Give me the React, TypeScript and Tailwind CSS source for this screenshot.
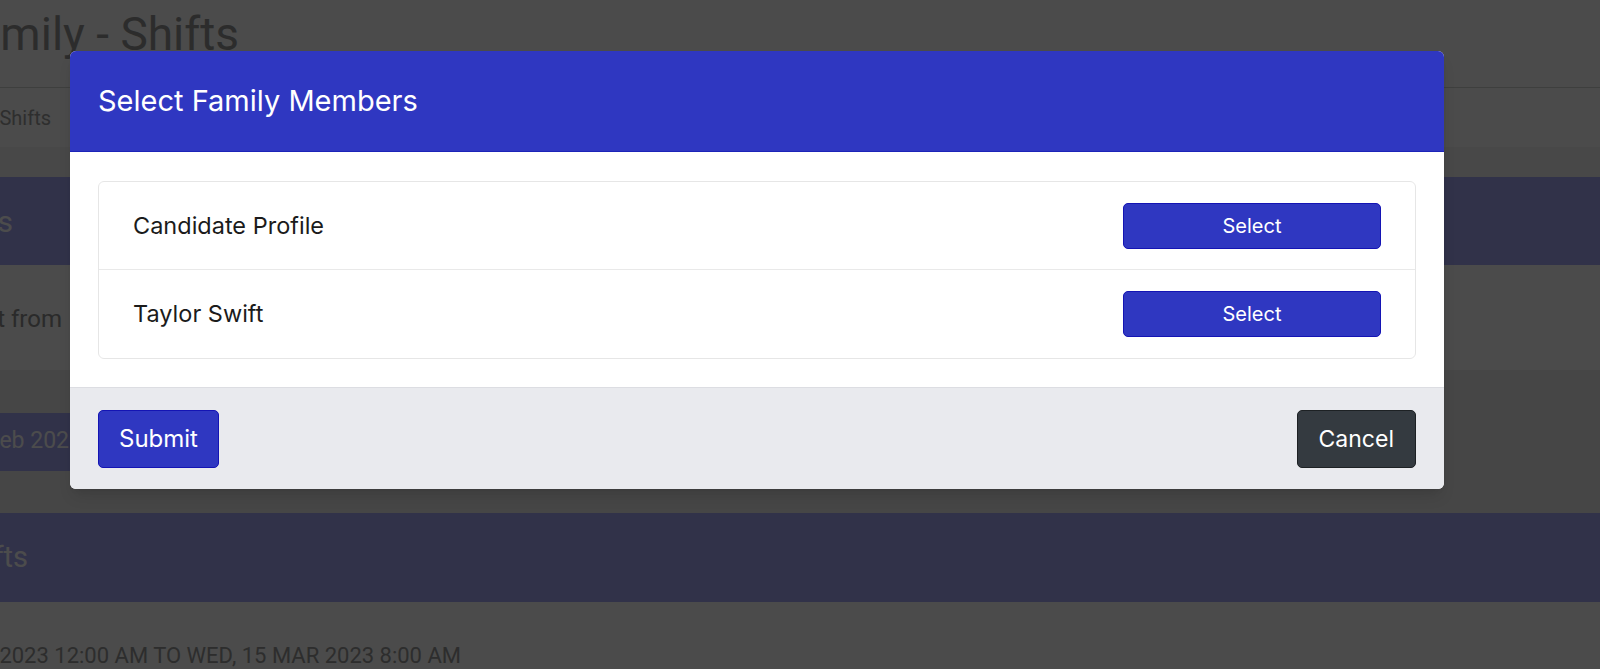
import React from "react"

const members = ["Candidate Profile", "Taylor Swift"]

function CutText({ width, className, children }: { width: number; className?: string; children: React.ReactNode }) {
    // text whose start is pushed off the left edge of the page
    return (
        <div className="flex justify-end" style={{ width }}>
            <span className={"shrink-0 whitespace-nowrap " + (className ?? "")}>{children}</span>
        </div>
    )
}

function BackgroundPage() {
    return (
        <div className="flex flex-col font-['Roboto',sans-serif]">
            <div className="flex h-[88px] items-start border-b border-[#cfd3d0] pt-[5px]">
                <CutText width={239} className="text-[46px] leading-[58px] text-[#959595]">
                    Family - Shifts
                </CutText>
            </div>
            <div className="flex h-[59px] items-center">
                <CutText width={51} className="text-[20px] text-[#9b9b9b]">
                    Shifts
                </CutText>
            </div>
            <div className="h-[30px] bg-[#f0f2f0]" />
            <div className="flex h-[88px] items-center bg-[#a4a7f6]">
                <CutText width={13} className="text-[30px] text-white">
                    Requests
                </CutText>
            </div>
            <div className="flex h-[105px] items-center pt-[2px]">
                <CutText width={62} className="text-[24px] text-[#8d8d8d]">
                    Select a shift from
                </CutText>
            </div>
            <div className="flex h-[143px] flex-col justify-center bg-[#ececec]">
                <div className="flex h-[58px] w-[1300px] items-center bg-[#a4a7f6]">
                    <CutText width={69} className="text-[23px] text-white">
                        Wed, 15 Feb 202
                    </CutText>
                </div>
            </div>
            <div className="flex h-[89px] items-center bg-[#a4a7f6]">
                <CutText width={28} className="text-[29px] text-white">
                    Shifts
                </CutText>
            </div>
            <div className="flex h-[67px] items-end">
                <CutText width={461} className="text-[22px] leading-[26px] text-[#979797]">
                    TUE, 14 MAR 2023 12:00 AM TO WED, 15 MAR 2023 8:00 AM
                </CutText>
            </div>
        </div>
    )
}

function MemberModal() {
    return (
        <div className="absolute left-[70px] top-[51px] w-[1374px] overflow-hidden rounded-[6px] bg-white font-['Inter',sans-serif] shadow-lg">
            <div className="flex h-[101px] items-center border-b border-[#1c24b8] bg-[#2f37c1] px-[28px]">
                <h2 className="text-[29px] text-white">Select Family Members</h2>
            </div>
            <div className="px-[28px] pb-[28px] pt-[29px]">
                <ul className="rounded-[6px] border border-[#e6e6e6]">
                    {members.map((name, i) => (
                        <li
                            key={name}
                            className={
                                "flex h-[88px] items-center justify-between pl-[34px] pr-[34px] " +
                                (i < members.length - 1 ? "border-b border-[#e9e9e9]" : "")
                            }
                        >
                            <span className="text-[23.5px] text-[#1b1b1b]">{name}</span>
                            <button className="h-[46px] w-[258px] rounded-[5px] border border-[#1414b4] bg-[#2f37c1] text-[20px] text-white">
                                Select
                            </button>
                        </li>
                    ))}
                </ul>
            </div>
            <div className="flex items-center justify-between border-t border-[#dcdde2] bg-[#e9eaee] px-[28px] pb-[21px] pt-[22px]">
                <button className="h-[58px] rounded-[5px] border border-[#1414b4] bg-[#2f37c1] px-[20px] text-[24px] text-white">
                    Submit
                </button>
                <button className="h-[58px] rounded-[5px] border border-[#1d2124] bg-[#343a40] px-[21px] text-[23px] text-white">
                    Cancel
                </button>
            </div>
        </div>
    )
}

export default function App() {
    return (
        <div className="relative h-[669px] w-full overflow-hidden bg-[#fafcfa]">
            <BackgroundPage />
            <div className="absolute inset-0 bg-black/70" />
            <MemberModal />
        </div>
    )
}
